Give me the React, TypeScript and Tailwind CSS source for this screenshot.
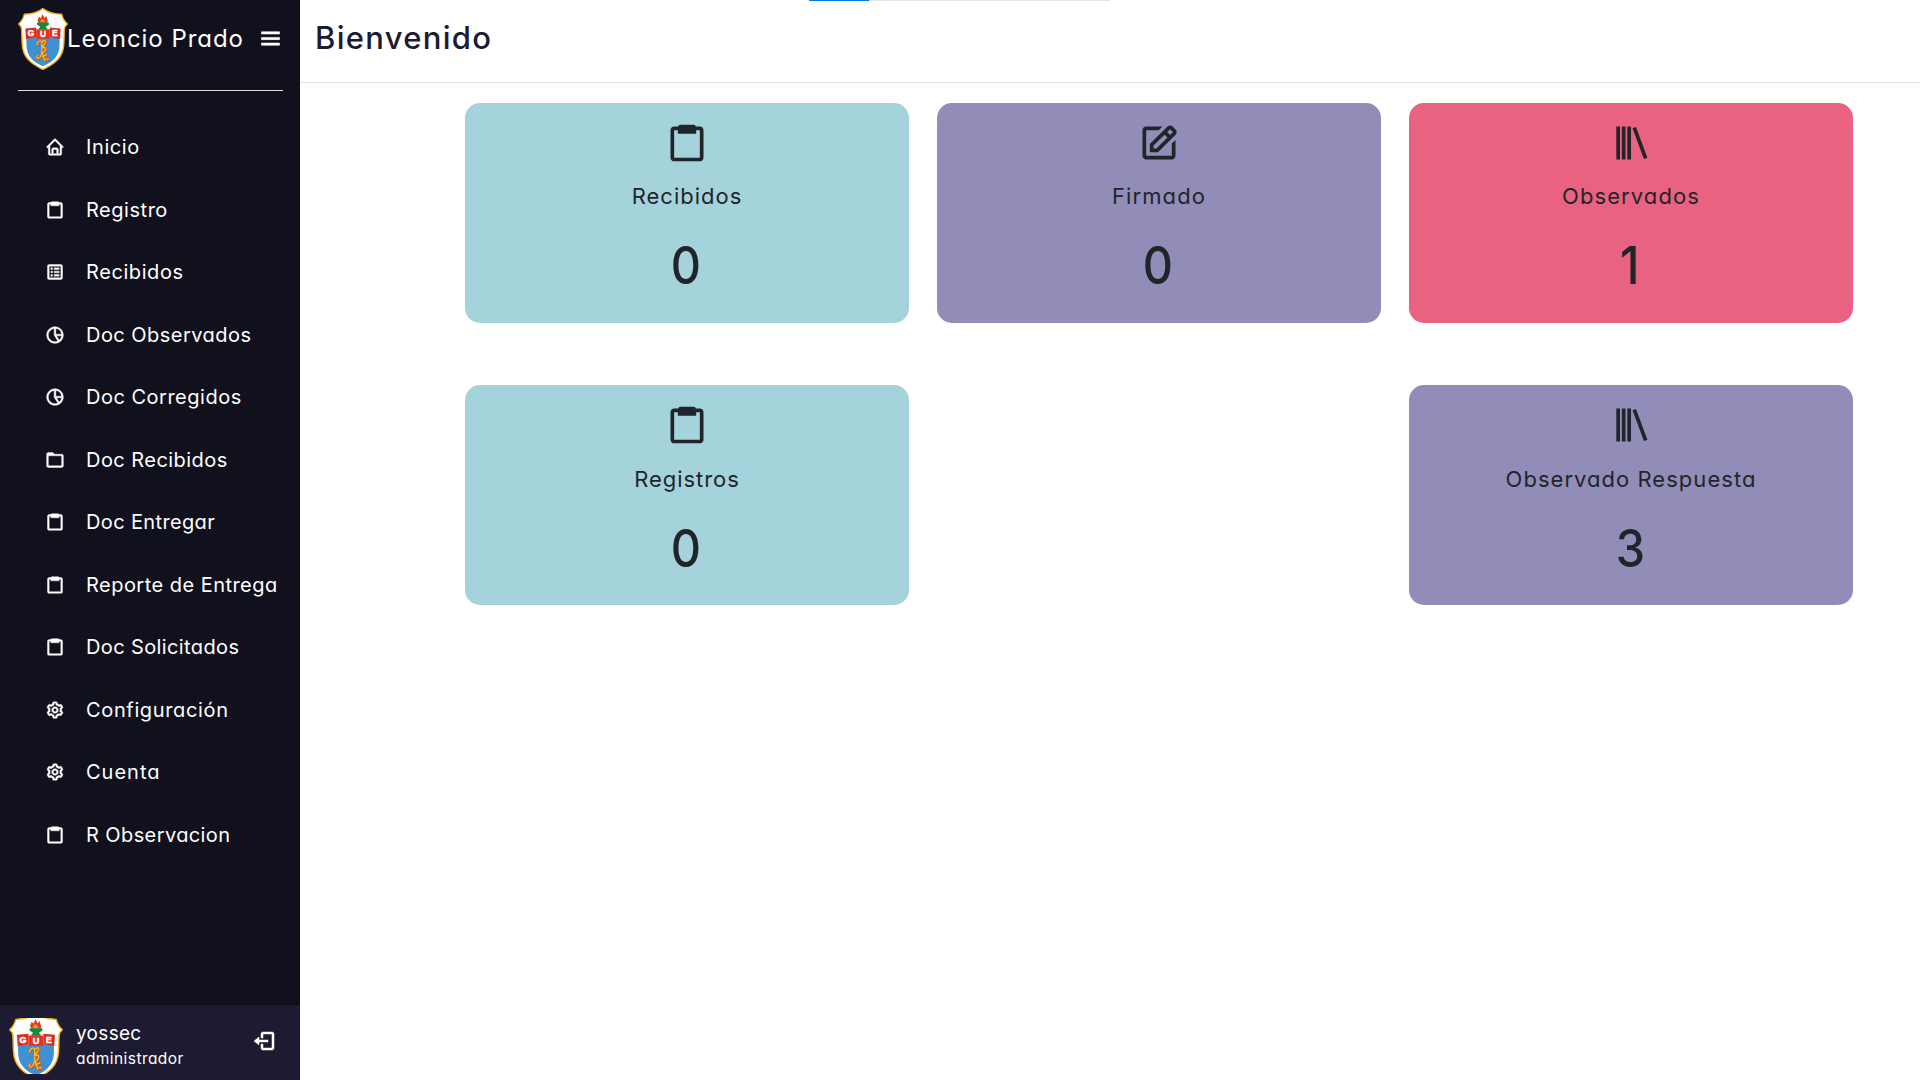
import type { IconType } from "react-icons";
import {
  BiClipboard,
  BiCog,
  BiEdit,
  BiFolder,
  BiHome,
  BiLibrary,
  BiLogOut,
  BiMenu,
  BiPieChartAlt2,
  BiSpreadsheet,
} from "react-icons/bi";

type MenuItem = { label: string; icon: IconType; spacing: string };

const menu: MenuItem[] = [
  { label: "Inicio", icon: BiHome, spacing: "tracking-[0.6px]" },
  { label: "Registro", icon: BiClipboard, spacing: "tracking-[0.53px]" },
  { label: "Recibidos", icon: BiSpreadsheet, spacing: "tracking-[0.58px]" },
  { label: "Doc Observados", icon: BiPieChartAlt2, spacing: "tracking-[0.46px]" },
  { label: "Doc Corregidos", icon: BiPieChartAlt2, spacing: "tracking-[0.5px]" },
  { label: "Doc Recibidos", icon: BiFolder, spacing: "tracking-[0.45px]" },
  { label: "Doc Entregar", icon: BiClipboard, spacing: "tracking-[0.36px]" },
  { label: "Reporte de Entrega", icon: BiClipboard, spacing: "tracking-[0.47px]" },
  { label: "Doc Solicitados", icon: BiClipboard, spacing: "tracking-[0.38px]" },
  { label: "Configuración", icon: BiCog, spacing: "tracking-[0.64px]" },
  { label: "Cuenta", icon: BiCog, spacing: "tracking-[1px]" },
  { label: "R Observacion", icon: BiClipboard, spacing: "tracking-[0.4px]" },
];

type CardProps = {
  label: string;
  value: number;
  icon: IconType;
  color: string;
  spacing: string;
  labelGap?: string;
};

function Card({ label, value, icon: Icon, color, spacing, labelGap = "mt-[15px]" }: CardProps) {
  return (
    <div className={`flex h-[220px] flex-col items-center rounded-[15px] pt-[18px] text-[#212529] ${color}`}>
      <Icon className="size-11" />
      <div className={`text-[22px] leading-[33px] ${labelGap} ${spacing}`}>{label}</div>
      <div className="mt-[23px] mr-[2px] scale-x-90 text-[52px] leading-[60px] font-medium">{value}</div>
    </div>
  );
}

const letters = [
  { char: "G", x: 39, y: 84.5 },
  { char: "U", x: 74.5, y: 87.5 },
  { char: "E", x: 110, y: 84.5 },
];

function Shield({ className }: { className: string }) {
  return (
    <svg viewBox="0 0 149 186" preserveAspectRatio="xMidYMid slice" className={className}>
      <path
        d="M74 2C62 12 40 19 19 19C16 32 10 41 2 48C7 52 11 58 11 66C12 92 11 110 15 125C22 155 48 170 74 184C101 170 127 155 134 125C138 110 137 92 138 66C138 58 142 52 147 48C139 41 133 32 130 19C109 19 86 12 74 2Z"
        fill="#ffffff"
        stroke="#f2b01a"
        strokeWidth="4"
        strokeLinejoin="round"
      />
      <path d="M25 88H124V108C124 146 103 162 74 174C46 162 25 146 25 108Z" fill="#3e92d2" />
      <path d="M22 62L54 59V88L24 93ZM127 62L95 59V88L125 93Z" fill="#dd2a1b" />
      <path d="M54 64H95V92H54Z" fill="#e8301f" />
      {letters.map(({ char, x, y }) => (
        <text
          key={char}
          x={x}
          y={y}
          textAnchor="middle"
          fontFamily="Liberation Sans, sans-serif"
          fontWeight="700"
          fontSize="25"
          fill="#ffffff"
          stroke="#ffffff"
          strokeWidth="1.4"
        >
          {char}
        </text>
      ))}
      <path d="M62 45C54 33 63 33 62 26L68 31L73 19L79 30L85 24C84 32 92 36 87 45Z" fill="#e63a1e" />
      <path d="M67 44C65 38 70 37 71 32C76 35 83 38 80 44Z" fill="#f79a1c" />
      <path d="M57 44H92V51L84 55V60H87V65H62V60H65V55L57 51Z" fill="#128a3f" />
      <g fill="none" strokeLinecap="round" strokeLinejoin="round">
        <path
          d="M58 111C58 99 72 96 72 105V139M60 143C54 147 57 155 63 151C70 147 72 139 72 126M72 105C79 94 87 99 81 108L71 121C81 115 87 123 80 131L72 139M74 138L81 159M87 140L74 147M84 154L91 154"
          stroke="#cf4a20"
          strokeWidth="7"
        />
        <path
          d="M57 110C57 98 71 95 71 104V138M59 142C53 146 56 154 62 150C69 146 71 138 71 125M71 104C78 93 86 98 80 107L70 120C80 114 86 122 79 130L71 138M73 137L80 158M86 139L73 146M83 153L90 153"
          stroke="#f4bb22"
          strokeWidth="4"
        />
      </g>
    </svg>
  );
}

function Sidebar() {
  return (
    <aside className="flex w-[300px] shrink-0 flex-col bg-[#11101d] text-white">
      <header className="mr-[17px] ml-[18px] flex h-[91px] items-start border-b border-[#dfdfe2]">
        <Shield className="mt-2 h-[62px] w-[50px] shrink-0" />
        <span className="mt-[21px] -ml-px text-[24px] leading-9 tracking-[0.95px] whitespace-nowrap">
          Leoncio Prado
        </span>
        <BiMenu className="mt-[25px] mr-[-1px] ml-auto size-[27px] shrink-0 stroke-[0.5]" />
      </header>
      <nav className="mt-[25px] flex flex-col">
        {menu.map(({ label, icon: Icon, spacing }) => (
          <a key={label} className="flex h-[62.5px] items-center gap-[21px] pl-[45px]">
            <Icon className="size-5 shrink-0 stroke-[0.5]" />
            <span className={`text-[20px] leading-[30px] whitespace-nowrap ${spacing}`}>{label}</span>
          </a>
        ))}
      </nav>
      <footer className="mt-auto flex h-[75px] items-center bg-[#1d1b31] pl-[9px]">
        <Shield className="mt-[7px] h-14 w-[54px] shrink-0 rounded-[10px]" />
        <div className="ml-[13px] flex flex-col pt-1.5">
          <span className="text-[19px] leading-[26px] tracking-[0.3px]">yossec</span>
          <span className="text-[15.5px] leading-6 tracking-[0.43px]">administrador</span>
        </div>
        <BiLogOut className="mr-6 mb-1 ml-auto size-6 stroke-[0.5]" />
      </footer>
    </aside>
  );
}

export default function App() {
  return (
    <div className="relative flex h-[1080px] w-[1920px] overflow-hidden bg-white font-['Inter',sans-serif] [font-feature-settings:'cv11']">
      <Sidebar />
      <main className="flex grow flex-col">
        <header className="flex h-[83px] items-start border-b border-[#e3e3e3] pt-[15px] pl-[15px]">
          <h1 className="text-[31px] leading-[46px] font-[450] tracking-[1.3px] text-[#1d1b31]">Bienvenido</h1>
        </header>
        <section className="mt-5 ml-[165px] grid grid-cols-[444px_444px_444px] gap-x-7 gap-y-[62px]">
          <Card label="Recibidos" value={0} icon={BiClipboard} color="bg-[#a5d3db]" spacing="tracking-[1px]" />
          <Card label="Firmado" value={0} icon={BiEdit} color="bg-[#918db8]" spacing="tracking-[1.1px]" />
          <Card label="Observados" value={1} icon={BiLibrary} color="bg-[#ea6281]" spacing="tracking-[1.1px]" />
          <Card
            label="Registros"
            value={0}
            icon={BiClipboard}
            color="bg-[#a5d3db]"
            spacing="tracking-[0.95px]"
            labelGap="mt-4"
          />
          <div />
          <Card
            label="Observado Respuesta"
            value={3}
            icon={BiLibrary}
            color="bg-[#918db8]"
            spacing="tracking-[1.03px]"
            labelGap="mt-4"
          />
        </section>
      </main>
      <div className="absolute top-0 left-[809px] h-px w-[301px] bg-[#e3e3e3]">
        <div className="h-px w-[60px] bg-[#0078d7]" />
      </div>
    </div>
  );
}
